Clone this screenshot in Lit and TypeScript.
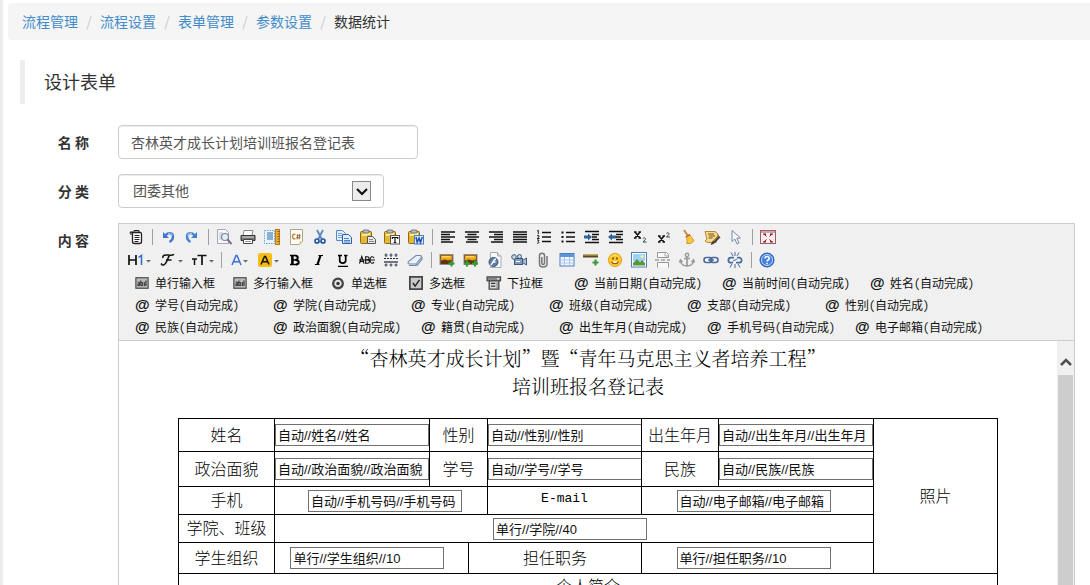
import { LitElement, html, svg, css, nothing, SVGTemplateResult } from "lit";
import { customElement, property } from "lit/decorators.js";

type Glyph = SVGTemplateResult;

const bars = (d: string) => svg`<path d=${d} stroke="#111" stroke-width="1.3" fill="none"/>`;
const arrowDown = svg`<path d="M18 8h5l-2.500 2.500z" fill="#666"/>`;
const board = svg`<rect x=".5" y="2.500" width="11" height="12" rx="1" fill="#e8b730" stroke="#8a6a1c"/><path d="M2 5l8-1v2L2 7z" fill="#fff2a8"/><rect x="3" y="1" width="6" height="3" rx="1" fill="#b9bcc4" stroke="#555" stroke-width=".7"/>`;
const photo = svg`<rect x="1" y="2.500" width="13" height="10" fill="#5b3413" stroke="#8c8c8c"/><path d="M2 3.500h11v4l-4 1-3-1-4 1z" fill="#f6a313"/><path d="M3 4h8v1.500H3z" fill="#ffd95c"/>`;
const plus = (x: number, y: number) => svg`<path d="M${x} ${y}v6M${x - 3} ${y + 3}h6" stroke="#3c9a32" stroke-width="2.200"/>`;

const glyphs: Record<string, Glyph> = {
  source: svg`<path d="M4.500 3.500h8c1 0 1 1 1 2v7c0 1.500-.5 2-2 2h-5c-1.500 0-2-.5-2-2z" fill="#fff" stroke="#222" stroke-width="1.300"/><path d="M3 2v4M1.500 4l3.500-1M6 1.500h5v2H6z" stroke="#222" fill="#999" stroke-width="1"/><path d="M6.500 6.500h5M6.500 8.500h5M6.500 10.500h5M6.500 12.500h4" stroke="#222"/>`,
  undo: svg`<path d="M3 3v6h6z" fill="#3f74d1"/><path d="M5 7c3-4.500 8-3.500 8 .5 0 2.500-1.500 4.500-3.500 5.500" fill="none" stroke="#3f74d1" stroke-width="2.300"/><path d="M8 4.500c2-1 4 0 4.500 2" stroke="#a9c8f7" fill="none"/>`,
  redo: svg`<path d="M13 3v6H7z" fill="#3f82d1"/><path d="M11 7C8 2.500 3 3.500 3 7.500 3 10 4.500 12 6.500 13" fill="none" stroke="#3f82d1" stroke-width="2.300"/><path d="M8 4.500c-2-1-4 0-4.500 2" stroke="#b4dcf7" fill="none"/>`,
  preview: svg`<path d="M1.500.5h8l3 3v11h-11z" fill="#f8f8fb" stroke="#a3a6b8"/><path d="M3 4h4M3 6h3M3 8h2M3 10h2" stroke="#b9bccb"/><circle cx="9" cy="8" r="3.500" fill="#dce8f6" fill-opacity=".8" stroke="#85859f" stroke-width="1.200"/><path d="M11.500 10.500l4 4.500" stroke="#7b6a8a" stroke-width="2"/>`,
  print: svg`<path d="M4 1.500h9l-1 5H3z" fill="#fff" stroke="#888"/><path d="M1 6.500h14v5H1z" fill="#777" stroke="#333"/><path d="M2 8h12" stroke="#ddd"/><path d="M3.500 10.500h9v4h-9z" fill="#fff" stroke="#444"/><path d="M5 12.500h6" stroke="#999"/>`,
  template: svg`<rect x=".5" y="1.500" width="10" height="13" fill="#eaf4ff" stroke="#6fa8dc" stroke-dasharray="1.500 1"/><path d="M3 4h6M3 6h6M3 8h6M3 10h6" stroke="#2b6ea8"/><rect x="11.500" y=".5" width="4" height="15" fill="#efb02f" stroke="#b87a16"/><path d="M13.500 2.500h2M13.500 5h2M13.500 7.500h2M13.500 10h2M13.500 12.500h2" stroke="#875508"/>`,
  code: svg`<path d="M2.500.5h12v12l-3 3h-9z" fill="#fffdf3" stroke="#aaa490"/><path d="M11.500 15.500v-3h3z" fill="#e6c27c"/><path d="M7.500 5.500C6 4.500 4.500 5.500 4.500 7.500s1.500 3 3 2" fill="none" stroke="#b8812c" stroke-width="1.300"/><path d="M9.700 5l-.6 5.500M11.700 5l-.6 5.500M8.500 6.700h4.300M8.200 8.700h4.300" stroke="#8a5c2c" stroke-width=".8"/>`,
  cut: svg`<path d="M5 1l5 9.500M11 1L6 10.500" stroke="#5c87b8" stroke-width="1.800"/><circle cx="5" cy="12" r="2" fill="none" stroke="#2457a8" stroke-width="1.700"/><circle cx="11" cy="12" r="2" fill="none" stroke="#2457a8" stroke-width="1.700"/>`,
  copy: svg`<path d="M.5 1.500h6l3 3v7h-9z" fill="#e3eefc" stroke="#5a87c9"/><path d="M2 4.500h4M2 6.500h4M2 8.500h4" stroke="#79a5df"/><path d="M6.500 5.500h6l3 3v6h-9z" fill="#e3eefc" stroke="#2f5ea8"/><path d="M8 9.500h5M8 11.500h6M8 13h6" stroke="#4c82cb"/>`,
  paste: svg`${board}<path d="M7.500 7.500h5l3 3v4h-8z" fill="#e8e8e8" stroke="#555"/><path d="M9 10.500h4M9 12.500h5" stroke="#888"/>`,
  plainpaste: svg`${board}<rect x="6.500" y="6.500" width="9" height="8.500" fill="#fff" stroke="#555"/><path d="M8 8.500h6M11 8.500V14M9.700 13.500h2.600M8.300 8v2M13.700 8v2" stroke="#111" stroke-width="1.200"/>`,
  wordpaste: svg`${board}<rect x="6.500" y="6.500" width="9" height="8.500" fill="#e6f0fd" stroke="#4c7cc2"/><path d="M8 8l1.200 5.500L11 9l1.500 4.500L14.300 8" fill="none" stroke="#1d54b0" stroke-width="1.500"/>`,
  left: bars("M1 3h14M1 5.500h9M1 8h14M1 10.500h9M1 13h12"),
  center: bars("M1 3h14M3.500 5.500h9M1 8h14M3.500 10.500h9M2 13h12"),
  right: bars("M1 3h14M6 5.500h9M1 8h14M6 10.500h9M3 13h12"),
  full: bars("M1 3h14M1 5.500h14M1 8h14M1 10.500h14M1 13h14"),
  ol: svg`<path d="M6 3.500h9M6 8h9M6 12.500h9" stroke="#111" stroke-width="1.300"/><path d="M1 2.200l1.300-1v4M1 6.700h2v1.200L1.200 9.500H3.500M1 11h2l-1 1.500c1.500 0 1.300 2.200-1 1.700" stroke="#111" fill="none" stroke-width=".9"/>`,
  ul: svg`<path d="M6 3.500h9M6 8h9M6 12.500h9" stroke="#111" stroke-width="1.300"/><path d="M1.500 2.500h2v2h-2zM1.500 7h2v2h-2zM1.500 11.500h2v2h-2z" fill="#111"/>`,
  indent: svg`<path d="M1 2.500h14M8 5.500h7M8 8h5M8 10.500h7M1 13.500h14" stroke="#111" stroke-width="1.400"/><path d="M0 6.500h4v-2l4 3.500-4 3.500v-2H0z" fill="#2a6496"/>`,
  outdent: svg`<path d="M1 2.500h14M8 5.500h7M8 8h5M8 10.500h7M1 13.500h14" stroke="#111" stroke-width="1.400"/><path d="M8 6.500H4v-2L0 8l4 3.500v-2h4z" fill="#2a6496"/>`,
  sub: svg`<path d="M3 3l5 6M8 3L3 9M2 3h2.500M6.500 3H9M2 9h2.500M6.500 9H9" stroke="#111" stroke-width="1.500"/><path d="M11 9.500c1-1.500 3-.5 2.300 1L11 13h3.500" stroke="#234" fill="none" stroke-width=".9"/>`,
  sup: svg`<path d="M3 7l5 6M8 7L3 13M2 7h2.500M6.500 7H9M2 13h2.500M6.500 13H9" stroke="#111" stroke-width="1.500"/><path d="M10.500 4.500c1-1.500 3-.5 2.300 1L10.500 8H14" stroke="#234" fill="none" stroke-width=".9"/>`,
  clear: svg`<path d="M4 1l4 6" stroke="#b98a3b" stroke-width="1.800"/><path d="M6 7.500l3.500-2 4.500 6c-1 2.500-4 3.500-7.500 3C7.500 12 7 10 6 7.500z" fill="#f6c83d" stroke="#c98c18" stroke-width=".8"/><path d="M6 8l4-2.300" stroke="#d4501f" stroke-width="1.400"/>`,
  format: svg`<path d="M1 2.500h10l3 2.500-2 8.500H4l-3-1.500 2-2z" fill="#f8d98e" stroke="#b8862b"/><path d="M4 5h6M5 7h6M4.500 9h4" stroke="#6f5524"/><path d="M14.500 6.500l-6 6-1.500 3 3-1 6-6z" fill="#444" stroke="#222" stroke-width=".5"/><path d="M14.500 7l-5.500 5.500" stroke="#f1a12b"/>`,
  select: svg`<path d="M4 1.500v11l2.800-2.500 2.200 5 2-1-2.200-4.800 3.700-.2z" fill="#f5f8fd" stroke="#7b88a6"/>`,
  fullscreen: svg`<rect x=".5" y="1.500" width="15" height="13" fill="#fbeeee" stroke="#9e5d66"/><path d="M.5 3h15" stroke="#9e5d66"/><path d="M3 5h3l-1 1 1.500 1.500M13 5h-3l1 1-1.500 1.500M3 13h3l-1-1 1.500-1.500M13 13h-3l1-1-1.500-1.500" stroke="#8b2430" fill="#8b2430" stroke-width="1"/>`,
  h1: svg`<path d="M1 3v10M8 3v10M1 8h7" stroke="#111" stroke-width="1.700"/><path d="M10.500 5.500l3-2V13" stroke="#2f6bc4" fill="none" stroke-width="1.500"/>${arrowDown}`,
  font: svg`<path d="M4 6C3 3 7 2.700 9 3s5 .3 6-.8M10.500 3.200C8.500 6 8 12 4.500 13 2.500 13.500 2 12 3 11.500M7 8h5.500" stroke="#111" fill="none" stroke-width="1.500"/><path d="M19 8h5l-2.500 2.500z" fill="#666"/>`,
  size: svg`<path d="M2 7h5M4.500 7v6" stroke="#111" stroke-width="1.500"/><path d="M7.500 3.500h9M12 3.500V13" stroke="#111" stroke-width="1.700"/><path d="M19 8h5l-2.500 2.500z" fill="#666"/>`,
  color: svg`<path d="M3 13l4-9.500h1L12 13M4.500 9.700h6" stroke="#3c6fd8" fill="none" stroke-width="1.500"/><path d="M14 8h5l-2.500 2.500z" fill="#666"/>`,
  hilite: svg`<rect x="0" y="1" width="14" height="14" rx="2" fill="#f9bd18"/><path d="M3 12.500l3.500-8h1l3.500 8M4.500 9.700h5" stroke="#111" fill="none" stroke-width="1.500"/><path d="M16 8h5l-2.500 2.500z" fill="#666"/>`,
  bold: svg`<path d="M3 3.500h6M3 12.500h7M5 3.500v9M5 8h4" stroke="#000" stroke-width="1.300"/><path d="M5.500 3v10" stroke="#000" stroke-width="2.300"/><path d="M8.500 3.700c3 0 3 4.100 0 4.100M9 8.200c3.600 0 3.600 4.300 0 4.300" stroke="#000" fill="none" stroke-width="2"/>`,
  italic: svg`<path d="M9.500 3.500l-3 9" stroke="#000" stroke-width="2.200"/><path d="M7.500 3.500H12M4 12.500h4.500" stroke="#000" stroke-width="1.200"/>`,
  underline: svg`<path d="M4.700 3v5.500c0 3.500 6 3.500 6 0V3" stroke="#000" fill="none" stroke-width="1.700"/><path d="M3 3.500h4M9 3.500h3.500M3 14.300h10" stroke="#000" stroke-width="1.300"/>`,
  strike: svg`<path d="M.5 11.500l2.300-7 2.300 7M1.300 9.500h3M6.700 4.500v7M6 4.700h2.500c2 0 2 3 0 3H7h1.700c2.300 0 2.300 3.600 0 3.600H6M15 6c-1-2-4-1.800-4 2s3 4 4 2" stroke="#111" fill="none" stroke-width="1.100"/><path d="M0 8h16" stroke="#111"/>`,
  lineheight: svg`<path d="M1 6.500h14" stroke="#223" stroke-dasharray="2 1"/><path d="M1 10h14" stroke="#223" stroke-width="1.200"/><path d="M3 1.500v3.500M8 1.500v3.500M13 1.500v3.500M3 11.500v3M8 11.500v3M13 11.500v3M1.500 3h3M6.500 3h3M11.500 3h3M1.500 13h3M6.500 13h3M11.500 13h3" stroke="#345" stroke-width="1.100"/>`,
  eraser: svg`<path d="M9 3.500h4c1.500 0 2 1 1 2.300L9 12H2.500c-1.500 0-2-1-1-2.300z" fill="#e9f1fb" stroke="#7189a8" stroke-width="1.100"/><path d="M9 12l1 1.800 5-6.300V5" fill="#9cb1cc" stroke="#7189a8"/><path d="M2 13.500h7" stroke="#7189a8"/>`,
  image: svg`${photo}${plus(12.5, 8.5)}`,
  multi: svg`${photo}${plus(4, 8.5)}${plus(12, 8.5)}`,
  flash: svg`<path d="M3.500.5h7l3.500 3.500v11.500H3.500z" fill="#fafafa" stroke="#aaa"/><path d="M10.500.5V4H14" fill="#ddd" stroke="#aaa"/><circle cx="6.500" cy="10" r="4.500" fill="#5a7fa8" stroke="#3c5674"/><path d="M9 7c-3 0-3 5.500-5.500 6M5.500 10h3" stroke="#fff" fill="none" stroke-width="1.300"/>`,
  media: svg`<rect x="3.500" y="6.500" width="8" height="6" fill="#7e9cc2" stroke="#40587a"/><path d="M11.500 8.500l4-2.500v7l-4-2.500z" fill="#a8bfdc" stroke="#40587a"/><circle cx="3" cy="5" r="2.300" fill="#cbd8e8" stroke="#40587a"/><circle cx="8.500" cy="4.500" r="2" fill="#cbd8e8" stroke="#40587a"/><path d="M5 9.500h4" stroke="#fff"/>`,
  file: svg`<path d="M12 4v8c0 4-7.500 4-7.500 0V3.500c0-3 5-3 5 0V11c0 2-2.700 2-2.700 0V5" fill="none" stroke="#777" stroke-width="1.500"/>`,
  table: svg`<rect x="1" y="1.500" width="14" height="12.500" fill="#f3f8ff" stroke="#4a7dc0"/><path d="M1 2h14v3H1z" fill="#5d94da"/><path d="M1.500 8h13M1.500 11h13M5.500 5v9M10.500 5v9" stroke="#a9c6ec"/>`,
  hr: svg`<path d="M0 2.500h15v3H0z" fill="#5c4a1f"/><path d="M0 3h15" stroke="#d6b455"/>${plus(12.5, 7.5)}`,
  emotion: svg`<circle cx="8" cy="8" r="6.700" fill="#ffc728" stroke="#e6a52a"/><path d="M4.500 5c2-2.500 5-2.500 7 0" stroke="#ffe995" fill="none"/><path d="M6 5.500v2M10 5.500v2" stroke="#6b3a06" stroke-width="1.500"/><path d="M4.500 9.500c1.500 3 5.500 3 7 0" stroke="#8a4a0a" stroke-width="1.200" fill="#fff"/>`,
  map: svg`<rect x=".5" y=".5" width="15" height="14.500" fill="#fff" stroke="#4f7fb5"/><path d="M2 2h12v7H2z" fill="#9fd0f5"/><path d="M2 11l4-4 3 3 2-2 3 3v2.500H2z" fill="#55973b"/><circle cx="11" cy="4.500" r="1.500" fill="#fff3a0"/>`,
  pagebreak: svg`<path d="M2.500.5v5h11v-3l-2-2zM2.500 15.500v-5h11v5" fill="#f8f8f8" stroke="#999"/><path d="M0 8h4M6 8h4M12 8h3" stroke="#777"/><path d="M10 .5V4h3.500" stroke="#aaa" fill="none"/>`,
  anchor: svg`<circle cx="8" cy="3" r="1.700" fill="none" stroke="#999" stroke-width="1.400"/><path d="M8 5v9M5 6.500h6" stroke="#999" stroke-width="1.700"/><path d="M1.500 9c.5 6.500 12.500 6.500 13 0M.5 10.500L1.500 8l2 2M15.500 10.500l-1-2.500-2 2" stroke="#999" fill="none" stroke-width="1.600"/>`,
  link: svg`<rect x="1" y="5.500" width="8" height="5" rx="2.500" fill="#fff" stroke="#476c9d" stroke-width="1.600"/><rect x="7" y="5.500" width="8" height="5" rx="2.500" fill="none" stroke="#476c9d" stroke-width="1.600"/><path d="M5 8h6" stroke="#476c9d" stroke-width="1.300"/>`,
  unlink: svg`<path d="M7 5.700H4c-3.500 0-3.500 5 0 5h2M9 10.700h3c3.500 0 3.500-5 0-5h-2" fill="none" stroke="#476c9d" stroke-width="1.700"/><path d="M8 0v4M4 .5l2 3.500M12 .5L10 4M8 12v4M5 12l-2 3.500M11 12l2 3.500M6 9l4-2" stroke="#476c9d"/>`,
  about: svg`<circle cx="8" cy="8" r="7" fill="#3f7fe0" stroke="#2757a6"/><circle cx="8" cy="8" r="5.500" fill="none" stroke="#bcd6fb" stroke-width="1"/><path d="M6 6.500c0-2.800 4.300-2.600 4.200 0 0 1.500-2.200 1.500-2.200 3M8 10.800v1.500" stroke="#fff" fill="none" stroke-width="1.600"/>`,
  text: svg`<rect x="1" y="2" width="14" height="12" fill="#bbb" stroke="#444" stroke-width="1.300"/><path d="M6.700 5v6.500M12.500 5v6.500" stroke="#222" stroke-width="1.200"/><path d="M3 7h2v4H3.300V9H5M7 7.500h1.800V11H7M10.700 7V11.500" stroke="#222" fill="none"/>`,
  radio: svg`<circle cx="8" cy="8.500" r="5.500" fill="#e4e4e4" stroke="#444" stroke-width="2.600"/><circle cx="8" cy="8.500" r="2" fill="#333"/>`,
  check: svg`<rect x="1" y="1" width="14" height="14" fill="#c9c9c9" stroke="#444" stroke-width="2"/><path d="M4.500 8l2.500 3.500L12 4.500" stroke="#222" fill="none" stroke-width="1.700"/>`,
  list: svg`<rect x="0" y="1" width="15.500" height="4.500" fill="#888" stroke="#444" stroke-width="1.300"/><path d="M2.500 5.500h11V15h-11z" fill="#ddd" stroke="#444" stroke-width="1.500"/><path d="M4.500 8.500h5M4.500 11.500h5" stroke="#333" stroke-width="1.300"/><path d="M11 2.500h3.500l-1.700 2z" fill="#fff"/><path d="M11.500 7v7" stroke="#666"/>`,
};

interface Tool { icon: string; label: string; size?: string }
const t = (icon: string, label: string, size = ""): Tool => ({ icon, label, size });
const BREAK = null;

const rowOne: (Tool | null)[] = [
  t("source", "HTML代码"), BREAK, t("undo", "后退"), t("redo", "前进"), BREAK,
  t("preview", "预览"), t("print", "打印"), t("template", "插入模板"), t("code", "插入程序代码"),
  t("cut", "剪切"), t("copy", "复制"), t("paste", "粘贴"), t("plainpaste", "粘贴为无格式文本"), t("wordpaste", "从Word粘贴"), BREAK,
  t("left", "左对齐"), t("center", "居中"), t("right", "右对齐"), t("full", "两端对齐"), t("ol", "编号"), t("ul", "项目符号"),
  t("indent", "增加缩进"), t("outdent", "减少缩进"), t("sub", "下标"), t("sup", "上标"), t("clear", "清理HTML代码"),
  t("format", "一键排版"), t("select", "全选"), BREAK, t("fullscreen", "全屏显示"),
];
const rowTwo: (Tool | null)[] = [
  t("h1", "段落", "wide"), t("font", "字体", "wide"), t("size", "文字大小", "wide"), BREAK,
  t("color", "文字颜色", "mid"), t("hilite", "文字背景", "mid"),
  t("bold", "粗体"), t("italic", "斜体"), t("underline", "下划线"), t("strike", "删除线"), t("lineheight", "行距"), t("eraser", "删除格式"), BREAK,
  t("image", "图片"), t("multi", "批量图片上传"), t("flash", "Flash"), t("media", "视音频"), t("file", "插入文件"),
  t("table", "表格"), t("hr", "插入横线"), t("emotion", "插入表情"), t("map", "地图"), t("pagebreak", "插入分页符"),
  t("anchor", "锚点"), t("link", "超级链接"), t("unlink", "取消超级链接"), BREAK, t("about", "关于"),
];

const auto = (name: string): Tool => t("@", `${name}(自动完成)`, name.length > 2 ? "long" : "auto");
const fieldRows: Tool[][] = [
  [t("text", "单行输入框", "field"), t("text", "多行输入框", "field"), t("radio", "单选框", "short"), t("check", "多选框", "short"), t("list", "下拉框", "drop"),
    auto("当前日期"), auto("当前时间"), auto("姓名")],
  ["学号", "学院", "专业", "班级", "支部", "性别"].map(auto),
  ["民族", "政治面貌", "籍贯", "出生年月", "手机号码", "电子邮箱"].map(auto),
];

@customElement("form-editor")
export class FormEditor extends LitElement {
  static styles = css`
    :host { display: block; border: 1px solid #ccc; background: #fff; }
    .toolbar { background: #f0f0f0; border-bottom: 1px solid #ccc; padding: 1px 5px 2px; }
    .row { display: flex; height: 23px; align-items: center; }
    .row + .fields { margin-top: 1px; }
    button { border: 0; padding: 0; margin: 0; background: none; color: #111; font: inherit; cursor: pointer; }
    .tool { width: 24px; height: 22px; padding-left: 4px; display: flex; align-items: center; flex: none; }
    .tool.wide { width: 31px; }
    .tool.mid { width: 29px; }
    svg { display: block; flex: none; overflow: visible; }
    .sep { width: 1px; height: 16px; margin: 0 3px 0 4px; background: #a0a0a0; flex: none; }
    .fields { display: flex; height: 22px; padding-left: 11px; font: 12px/22px "Noto Sans Mono CJK SC", "Noto Sans CJK SC", sans-serif; }
    .item { display: flex; align-items: center; gap: 6px; flex: none; white-space: nowrap; }
    .short { width: 78px; }
    .drop { width: 87px; }
    .field { width: 98px; }
    .auto { width: 138px; }
    .long { width: 148px; }
    .at { width: 14px; font: bold 15px/20px "Liberation Sans", sans-serif; }
    .area { display: flex; height: 320px; overflow: hidden; }
    .doc { flex: 1; min-width: 0; padding-top: 3px; color: #000; font-family: "Noto Sans CJK SC", sans-serif; }
    h3 { margin: 0 0 18px; font-weight: 300; font-size: 19px; line-height: 28px; text-align: center; font-family: "Noto Serif CJK SC", "Noto Sans CJK SC", serif; }
    table { width: 820px; margin: 0 auto; border-collapse: collapse; table-layout: fixed; font-size: 16px; font-weight: 300; line-height: 22px; }
    td, th { border: 1px solid #000; padding: 0; text-align: center; vertical-align: middle; font-weight: inherit; }
    th, .photo { padding-bottom: 3px; }
    .lead { padding-left: 8px; }
    .trail { padding-right: 8px; }
    .mail { font: 13px/22px "Liberation Mono", monospace; }
    .c96 { width: 96px; } .c155 { width: 155px; } .c154 { width: 154px; } .c39 { width: 39px; } .c19 { width: 19px; } .c77 { width: 77px; } .c124 { width: 124px; }
    .r33 { height: 33px; } .r35 { height: 35px; } .r28 { height: 28px; } .r31 { height: 31px; } .r26 { height: 26px; }
    input { display: block; margin: 0 auto; box-sizing: border-box; width: 154px; height: 22px; border: 1px solid #707070; border-radius: 0; background: #fff; padding: 0 2px 1px; color: #111; font: 13px "Liberation Sans", "Noto Sans CJK SC", sans-serif; }
    .bar { width: 17px; background: #f0f0f0; padding: 0 1px; box-sizing: border-box; display: flex; flex-direction: column; }
    .up { height: 34px; display: flex; align-items: center; justify-content: center; padding-top: 8px; box-sizing: border-box; }
    .thumb { flex: 1; background: #cdcdcd; }
  `;

  private tool(x: Tool | null) {
    return x === null
      ? html`<span class="sep"></span>`
      : html`<button type="button" class="tool ${x.size}" title=${x.label} aria-label=${x.label}><svg width="16" height="16" viewBox="0 0 16 16" fill="none">${glyphs[x.icon]}</svg></button>`;
  }

  private field(x: Tool) {
    return html`<button type="button" class="item ${x.size}">${x.icon === "@"
      ? html`<span class="at">@</span>`
      : html`<svg width="14" height="14" viewBox="0 0 16 16" fill="none">${glyphs[x.icon]}</svg>`}<span>${x.label}</span></button>`;
  }

  private box(value: string, name: string) {
    return html`<input type="text" aria-label=${name} .value=${value}>`;
  }

  render() {
    return html`
      <div class="toolbar" role="toolbar">
        <div class="row">${rowOne.map((x) => this.tool(x))}</div>
        <div class="row">${rowTwo.map((x) => this.tool(x))}</div>
        ${fieldRows.map((r) => html`<div class="fields">${r.map((x) => this.field(x))}</div>`)}
      </div>
      <div class="area">
        <div class="doc" lang="zh-CN">
          <h3>“杏林英才成长计划”暨“青年马克思主义者培养工程”<br>培训班报名登记表</h3>
          <table>
            <colgroup><col class="c96"><col class="c155"><col class="c39"><col class="c19"><col class="c154"><col class="c77"><col class="c155"><col class="c124"></colgroup>
            <tr class="r33">
              <th>姓名</th><td>${this.box("自动//姓名//姓名", "姓名")}</td>
              <th colspan="2">性别</th><td>${this.box("自动//性别//性别", "性别")}</td>
              <th>出生年月</th><td>${this.box("自动//出生年月//出生年月", "出生年月")}</td>
              <td rowspan="5" class="photo">照片</td>
            </tr>
            <tr class="r35">
              <th>政治面貌</th><td>${this.box("自动//政治面貌//政治面貌", "政治面貌")}</td>
              <th colspan="2">学号</th><td>${this.box("自动//学号//学号", "学号")}</td>
              <th>民族</th><td>${this.box("自动//民族//民族", "民族")}</td>
            </tr>
            <tr class="r28">
              <th>手机</th><td colspan="3" class="lead">${this.box("自动//手机号码//手机号码", "手机")}</td>
              <th class="mail">E-mail</th><td colspan="2" class="trail">${this.box("自动//电子邮箱//电子邮箱", "E-mail")}</td>
            </tr>
            <tr class="r28">
              <th>学院、班级</th><td colspan="6" class="trail">${this.box("单行//学院//40", "学院、班级")}</td>
            </tr>
            <tr class="r31">
              <th>学生组织</th><td colspan="2" class="trail">${this.box("单行//学生组织//10", "学生组织")}</td>
              <th colspan="2">担任职务</th><td colspan="2" class="trail">${this.box("单行//担任职务//10", "担任职务")}</td>
            </tr>
            <tr class="r26"><th colspan="8">个人简介</th></tr>
          </table>
        </div>
        <div class="bar">
          <div class="up"><svg width="14" height="10" viewBox="0 0 14 10" fill="none"><path d="M2 8l5-5 5 5" stroke="#505050" stroke-width="2.500"/></svg></div>
          <div class="thumb"></div>
        </div>
      </div>`;
  }
}

@customElement("app-root")
export class AppRoot extends LitElement {
  @property({ attribute: false }) crumbs = ["流程管理", "流程设置", "表单管理", "参数设置", "数据统计"];

  static styles = css`
    :host { display: block; height: 100vh; overflow: hidden; box-sizing: border-box; border-left: 3px solid #ececec; padding-top: 3px; background: #fff; color: #333; font: 14px/20px "Noto Sans CJK SC", sans-serif; }
    .crumbs { display: flex; align-items: center; box-sizing: border-box; height: 37px; margin-left: 5px; padding: 0 0 2px 14px; background: #f5f5f5; border-radius: 4px 0 0 4px; }
    .crumbs a { color: #428bca; text-decoration: none; }
    .slash { width: 22px; text-align: center; color: #ccc; }
    h2 { margin: 20px 0 21px 17px; padding: 0 19px 2px; border-left: 5px solid #eee; font-size: 18px; font-weight: 400; line-height: 42px; }
    form { display: grid; grid-template-columns: 86px minmax(0, 1fr); column-gap: 29px; row-gap: 15px; margin-right: 15px; }
    label, .label { padding-top: 7px; text-align: right; font-weight: 700; }
    .control { display: block; box-sizing: border-box; height: 34px; border: 1px solid #ccc; border-radius: 4px; background: #fff; box-shadow: inset 0 1px 1px rgba(0, 0, 0, 0.075); color: #555; font: inherit; padding: 0 12px 1px; }
    .name { width: 300px; }
    .pick { position: relative; width: 266px; }
    select.control { width: 100%; appearance: none; padding: 0 14px 2px; }
    .drop { position: absolute; right: 13px; top: 7px; width: 19px; height: 20px; box-sizing: border-box; border: 1px solid #888; background: #ececec; pointer-events: none; display: flex; align-items: center; justify-content: center; }
  `;

  render() {
    const last = this.crumbs.length - 1;
    return html`
      <nav class="crumbs">
        ${this.crumbs.map((c, i) => html`${i ? html`<span class="slash">/</span>` : nothing}${i < last ? html`<a href="#">${c}</a>` : html`<span>${c}</span>`}`)}
      </nav>
      <h2>设计表单</h2>
      <form>
        <label for="name">名 称</label>
        <input id="name" class="control name" type="text" value="杏林英才成长计划培训班报名登记表">
        <label for="kind">分 类</label>
        <div class="pick">
          <select id="kind" class="control"><option>团委其他</option></select>
          <span class="drop"><svg width="14" height="9" viewBox="0 0 13 9" fill="none"><path d="M1.500 2l5 5 5-5" stroke="#111" stroke-width="2.200"/></svg></span>
        </div>
        <span class="label">内 容</span>
        <form-editor></form-editor>
      </form>`;
  }
}
